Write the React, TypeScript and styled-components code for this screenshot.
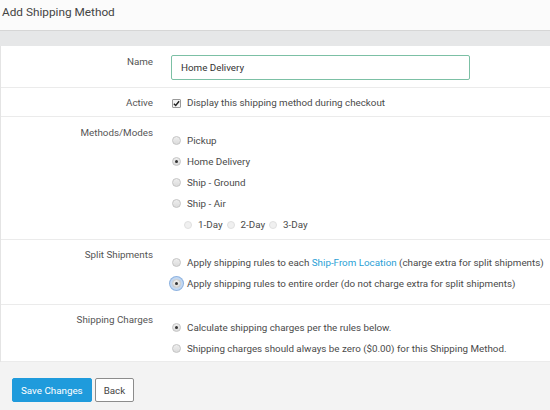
import React from 'react';
import styled, { createGlobalStyle } from 'styled-components';

const Global = createGlobalStyle`
  html, body { margin: 0; padding: 0; background: #fbfbfb; }
  body { font-family: Roboto, "Liberation Sans", Arial, sans-serif; }
  * { box-sizing: border-box; }
`;

const Page = styled.div`
  width: 550px;
  height: 410px;
  overflow: hidden;
  display: flex;
  flex-direction: column;
  background: #fbfbfb;
`;

const Title = styled.h1`
  margin: 0;
  height: 30px;
  padding: 3px 0 0 2px;
  font-size: 11.8px;
  line-height: 18px;
  font-weight: 400;
  color: #444;
`;

const Band = styled.div`
  height: 16px;
  background: #e6e7e8;
  border-top: 1px solid #d6d6d6;
`;

const Form = styled.div`
  background: #fff;
  border-left: 1px solid #e4e4e4;
`;

const Row = styled.div<{ $pt: number; $pb: number }>`
  display: grid;
  grid-template-columns: 152px 1fr;
  column-gap: 18px;
  padding: ${p => p.$pt}px 0 ${p => p.$pb}px;
  border-bottom: 1px solid #ebebeb;
`;

const Label = styled.div`
  text-align: right;
  font-size: 9.8px;
  line-height: 14px;
  color: #555;
`;

const Value = styled.div`
  font-size: 9.8px;
  line-height: 14px;
  color: #4a4a4a;
  white-space: nowrap;
`;

const CheckLine = styled.div`
  display: flex;
  align-items: center;
  gap: 6px;
  height: 14px;
  padding-left: 1px;
`;

const OptionList = styled.div`
  display: flex;
  flex-direction: column;
  padding-top: 4px;
`;

const Option = styled.div`
  display: flex;
  align-items: center;
  height: 21px;
  gap: 6px;
  padding-left: 1px;
`;

const SubOptions = styled.div`
  display: flex;
  align-items: center;
  gap: 4px;
  height: 21px;
  padding-left: 13px;
`;

const SubItem = styled.span`
  display: inline-flex;
  align-items: center;
  gap: 6px;
`;

const Radio = styled.span<{ $checked?: boolean; $focus?: boolean; $small?: boolean }>`
  position: relative;
  flex: none;
  width: ${p => (p.$small ? 8 : 9)}px;
  height: ${p => (p.$small ? 8 : 9)}px;
  border-radius: 50%;
  border: 1px solid ${p => (p.$small ? '#e0e0e0' : '#c4c4c4')};
  background: ${p => (p.$small ? '#f0f0f0' : 'linear-gradient(#eeeeee, #dcdcdc)')};
  box-shadow: ${p => (p.$focus ? '0 0 0 2px #c3d8f2, 0 0 0 3px #8eb3e0' : 'none')};
  &::after {
    content: '';
    display: ${p => (p.$checked ? 'block' : 'none')};
    position: absolute;
    left: 50%;
    top: 50%;
    width: 3px;
    height: 3px;
    margin: -1.5px 0 0 -1.5px;
    border-radius: 50%;
    background: #333;
  }
`;

const Check = styled.span`
  flex: none;
  width: 9px;
  height: 9px;
  border: 1px solid #9a9a9a;
  border-radius: 1px;
  background: #f4f4f4;
  display: inline-flex;
  align-items: center;
  justify-content: center;
`;

const Input = styled.div`
  width: 299px;
  height: 25px;
  border: 1px solid #7cc0a5;
  border-radius: 2px;
  padding: 0 9px;
  display: flex;
  align-items: center;
  font-size: 9.8px;
  color: #333;
`;

const Link = styled.a`
  color: #2a9fd6;
  text-decoration: none;
`;

const Footer = styled.div`
  flex: 1;
  background: #f3f3f3;
  display: flex;
  align-items: flex-start;
  gap: 3px;
  padding: 16px 0 0 12px;
`;

const Button = styled.button<{ $primary?: boolean }>`
  height: 24px;
  padding: 0 8px;
  font-family: inherit;
  font-size: 9.8px;
  border-radius: 2px;
  cursor: pointer;
  color: ${p => (p.$primary ? '#fff' : '#444')};
  background: ${p => (p.$primary ? '#1f9bdc' : '#fff')};
  border: 1px solid ${p => (p.$primary ? '#1f9bdc' : '#8c8c8c')};
`;

export default function App() {
  return (
    <Page>
      <Global />
      <Title>Add Shipping Method</Title>
      <Band />
      <Form>
        <Row $pt={9} $pb={7}>
          <Label>Name</Label>
          <Input>Home Delivery</Input>
        </Row>
        <Row $pt={8} $pb={6}>
          <Label>Active</Label>
          <Value>
            <CheckLine>
              <Check>
                <svg width="7" height="7" viewBox="0 0 8 8">
                  <path d="M1 4.2 L3.1 6.3 L7 1.5" fill="none" stroke="#222" strokeWidth="1.6" />
                </svg>
              </Check>
              Display this shipping method during checkout
            </CheckLine>
          </Value>
        </Row>
        <Row $pt={9} $pb={4}>
          <Label>Methods/Modes</Label>
          <Value>
            <OptionList>
              <Option><Radio />Pickup</Option>
              <Option><Radio $checked />Home Delivery</Option>
              <Option><Radio />Ship - Ground</Option>
              <Option><Radio />Ship - Air</Option>
              <SubOptions>
                <SubItem><Radio $small />1-Day</SubItem>
                <SubItem><Radio $small />2-Day</SubItem>
                <SubItem><Radio $small />3-Day</SubItem>
              </SubOptions>
            </OptionList>
          </Value>
        </Row>
        <Row $pt={8} $pb={10}>
          <Label>Split Shipments</Label>
          <Value>
            <OptionList>
              <Option>
                <Radio />
                <span>
                  Apply shipping rules to each <Link>Ship-From Location</Link> (charge extra for split shipments)
                </span>
              </Option>
              <Option>
                <Radio $checked $focus />
                Apply shipping rules to entire order (do not charge extra for split shipments)
              </Option>
            </OptionList>
          </Value>
        </Row>
        <Row $pt={8} $pb={2}>
          <Label>Shipping Charges</Label>
          <Value>
            <OptionList>
              <Option><Radio $checked />Calculate shipping charges per the rules below.</Option>
              <Option><Radio />Shipping charges should always be zero ($0.00) for this Shipping Method.</Option>
            </OptionList>
          </Value>
        </Row>
      </Form>
      <Footer>
        <Button $primary>Save Changes</Button>
        <Button>Back</Button>
      </Footer>
    </Page>
  );
}
